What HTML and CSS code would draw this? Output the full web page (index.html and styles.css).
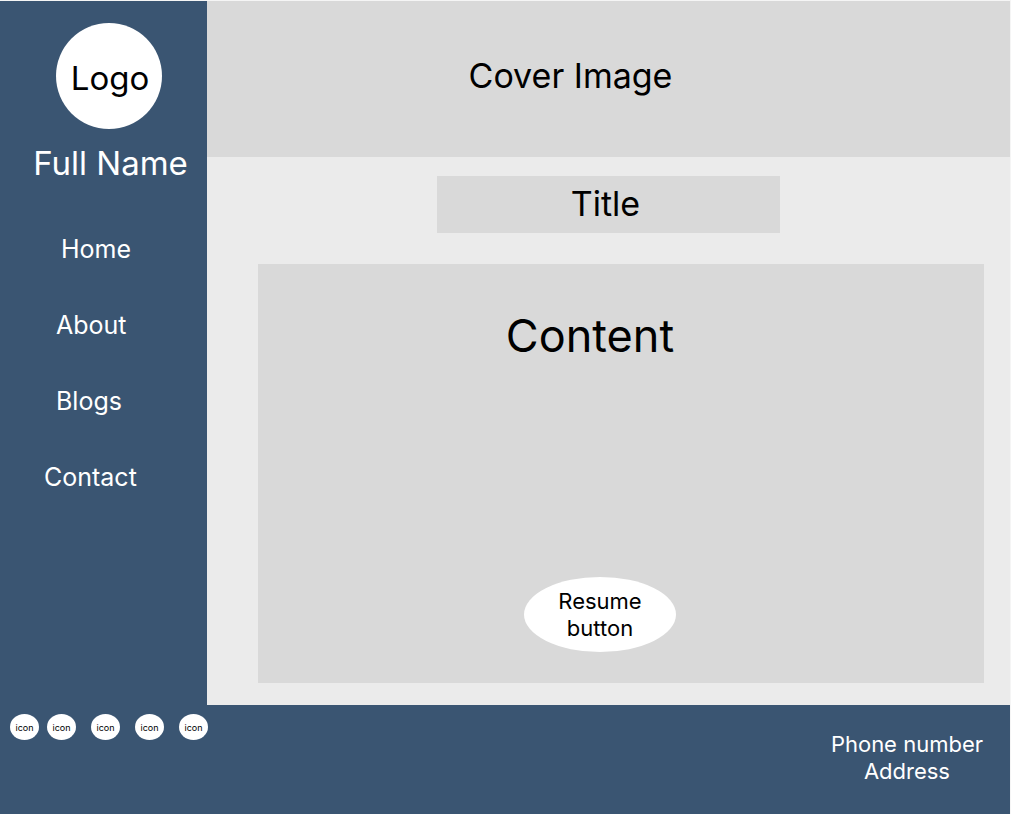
FILE: index.html
```html
<!DOCTYPE html>
<html lang="en">
<head>
<meta charset="utf-8">
<meta name="viewport" content="width=device-width, initial-scale=1">
<title>Full Name</title>
<link rel="stylesheet" href="styles.css">
</head>
<body>
<div class="page">
  <aside class="sidebar">
    <div class="logo">Logo</div>
    <p class="name">Full Name</p>
    <nav class="nav" aria-label="Main">
      <a class="nav-link indent-large" href="#home">Home</a>
      <a class="nav-link indent-medium" href="#about">About</a>
      <a class="nav-link indent-medium" href="#blogs">Blogs</a>
      <a class="nav-link indent-small" href="#contact">Contact</a>
    </nav>
  </aside>
  <main class="main">
    <header class="cover">Cover Image</header>
    <h1 class="title">Title</h1>
    <section class="content">
      <h2 class="content-heading">Content</h2>
      <button class="resume" type="button">Resume<br>button</button>
    </section>
  </main>
  <footer class="footer">
    <div class="social">
      <a class="social-link" href="#icon1">icon</a>
      <a class="social-link" href="#icon2">icon</a>
      <a class="social-link" href="#icon3">icon</a>
      <a class="social-link" href="#icon4">icon</a>
      <a class="social-link" href="#icon5">icon</a>
    </div>
    <address class="contact">Phone number<br>Address</address>
  </footer>
</div>
</body>
</html>
```
FILE: styles.css
```css
* {
  box-sizing: border-box;
}

body {
  margin: 0;
  background: #f5f5f5;
  color: #000;
  font-family: Inter, "Liberation Sans", sans-serif;
}

a {
  color: inherit;
  text-decoration: none;
}

.page {
  display: grid;
  grid-template-columns: 207px 1fr;
  grid-template-rows: 1fr auto;
  min-height: 100vh;
  padding: 1px 1px 0 0;
}

.sidebar {
  background: #3a5572;
  color: #fff;
  padding-top: 22px;
}

.logo {
  display: flex;
  align-items: center;
  justify-content: center;
  width: 106px;
  height: 106px;
  margin-left: 56px;
  padding: 4px 0 0 2px;
  border-radius: 50%;
  background: #fff;
  color: #000;
  font-size: 33px;
}

.name {
  margin: 13px 0 0;
  padding-left: 14px;
  font-size: 33px;
  line-height: 42px;
  text-align: center;
}

.nav {
  display: flex;
  flex-direction: column;
  gap: 44px;
  margin-top: 49px;
}

.nav-link {
  font-size: 25px;
  line-height: 32px;
}

.indent-small {
  padding-left: 44px;
}

.indent-medium {
  padding-left: 56px;
}

.indent-large {
  padding-left: 61px;
}

.main {
  display: flex;
  flex-direction: column;
  background: #ebebeb;
}

.cover {
  height: 156px;
  padding: 54px 76px 0 0;
  background: #d9d9d9;
  font-size: 34px;
  line-height: 42px;
  text-align: center;
}

.title {
  align-self: center;
  width: 343px;
  margin: 19px 0 31px;
  padding: 7px 6px 8px 0;
  background: #d9d9d9;
  font-size: 34px;
  font-weight: 400;
  line-height: 42px;
  text-align: center;
}

.content {
  display: flex;
  flex: 1;
  flex-direction: column;
  align-items: center;
  justify-content: space-between;
  margin: 0 26px 22px 51px;
  padding: 44px 62px 31px 0;
  background: #d9d9d9;
}

.content-heading {
  margin: 0;
  font-size: 45px;
  font-weight: 400;
  line-height: 56px;
}

.resume {
  width: 152px;
  height: 75px;
  margin-left: 20px;
  padding: 0;
  border: 0;
  border-radius: 50%;
  background: #fff;
  color: #000;
  font: inherit;
  font-size: 22px;
  line-height: 27px;
}

.footer {
  display: flex;
  grid-column: 1 / -1;
  align-items: flex-start;
  justify-content: space-between;
  padding: 9px 27px 29px 10px;
  background: #3a5572;
  color: #fff;
}

.social {
  display: flex;
  gap: 15px;
}

.social-link {
  display: flex;
  align-items: center;
  justify-content: center;
  width: 29px;
  height: 26px;
  border-radius: 50%;
  background: #fff;
  color: #000;
  font-size: 9px;
}

.social-link:first-child {
  margin-right: -7px;
}

.contact {
  padding-top: 17px;
  font-size: 22px;
  font-style: normal;
  line-height: 27px;
  text-align: center;
}
```
